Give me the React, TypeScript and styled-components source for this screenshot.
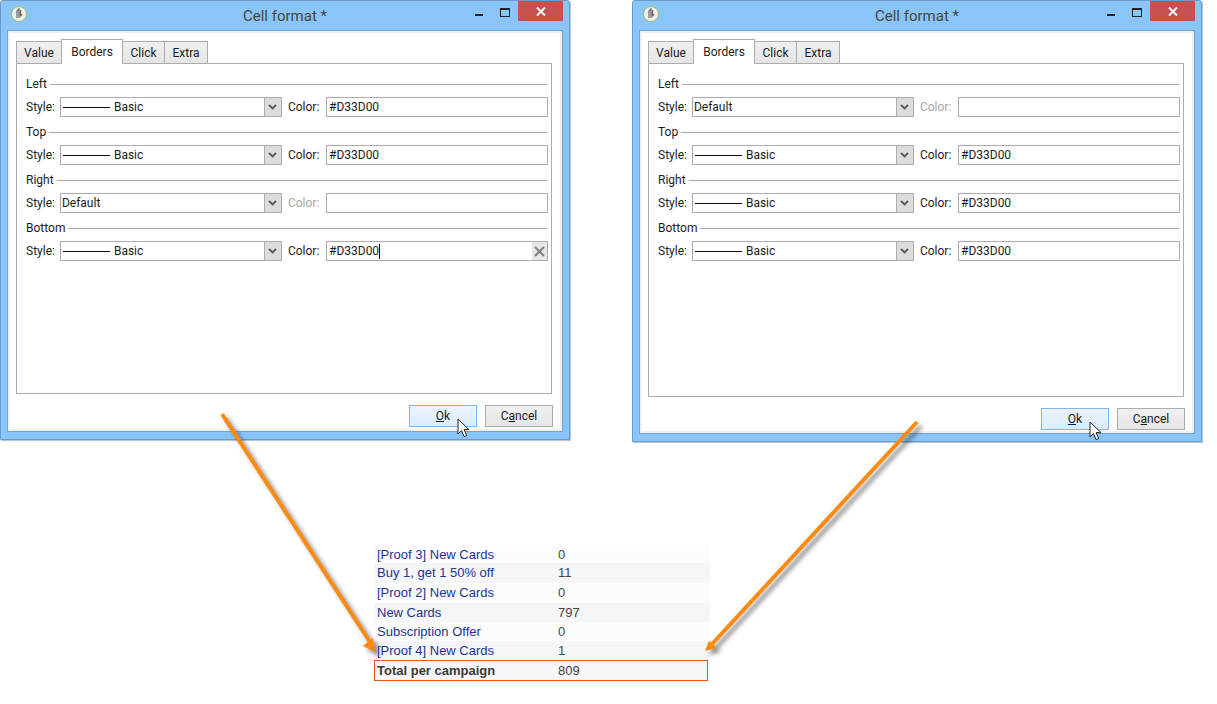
import React from 'react';
import styled, { createGlobalStyle } from 'styled-components';

const GlobalStyle = createGlobalStyle`
    html, body {
        margin: 0;
        padding: 0;
        background: #fff;
    }
`;

const Page = styled.div`
    position: relative;
    width: 1217px;
    height: 704px;
    overflow: hidden;
    font-family: Roboto, 'Noto Sans', sans-serif;
    font-size: 12px;
    color: #1c1c1c;
`;

const Desktop = styled.div`
    display: flex;
    align-items: flex-start;
    gap: 62px;
`;

const DialogWindow = styled.div<{ $height: number }>`
    display: flex;
    flex-direction: column;
    box-sizing: border-box;
    width: 570px;
    height: ${props => props.$height}px;
    background: #8ac5fa;
    border: 1px solid #6c9bc9;
    border-radius: 3px 3px 0 0;
    box-shadow: 1px 1px 1px rgba(90, 130, 170, 0.5);
`;

const TitleBar = styled.div`
    position: relative;
    flex: 0 0 29px;
    display: flex;
    align-items: center;
    justify-content: center;
    font-size: 15px;
    color: #444;
`;

const AppIcon = styled.svg`
    position: absolute;
    left: 9px;
    top: 4px;
`;

const WindowButtons = styled.div`
    position: absolute;
    right: 6px;
    top: 0;
    display: flex;
    align-items: flex-start;
`;

const MinButton = styled.div`
    width: 8px;
    height: 2px;
    margin: 13px 17px 0 0;
    background: #222;
`;

const MaxButton = styled.div`
    box-sizing: border-box;
    width: 10px;
    height: 9px;
    margin: 7px 8px 0 0;
    border: 1px solid #222;
    border-top-width: 2px;
`;

const CloseButton = styled.div`
    display: flex;
    align-items: center;
    justify-content: center;
    width: 45px;
    height: 20px;
    background: #c75050;
`;

const Client = styled.div<{ $bottom: number }>`
    flex: 1;
    display: flex;
    flex-direction: column;
    margin: 0 6px 7px;
    padding: 8px 10px ${props => props.$bottom}px 8px;
    background: #fff;
    border: 1px solid #6fa3d6;
    box-shadow: inset 0 2px 0 #f0f0f0, inset -2px 0 0 #f0f0f0, inset 0 -2px 0 #f0f0f0, inset 2px 0 0 #f0f0f0;
`;

const TabBar = styled.div`
    display: flex;
    align-items: flex-end;
    height: 25px;
    margin-bottom: -1px;
    position: relative;
    z-index: 1;
`;

const Tab = styled.div<{ $active?: boolean; $width: number }>`
    box-sizing: border-box;
    display: flex;
    align-items: center;
    justify-content: center;
    width: ${props => props.$width}px;
    height: ${props => (props.$active ? 25 : 23)}px;
    margin-right: -1px;
    border: 1px solid #acacac;
    border-bottom-color: ${props => (props.$active ? '#fff' : '#acacac')};
    background: ${props => (props.$active ? '#fff' : 'linear-gradient(#f0f0f0, #e5e5e5)')};
    position: relative;
    z-index: ${props => (props.$active ? 1 : 0)};
`;

const Pane = styled.div`
    flex: 1;
    display: flex;
    flex-direction: column;
    padding: 8px 3px 0 9px;
    border: 1px solid #acacac;
`;

const Section = styled.div`
    height: 48px;
`;

const SectionHead = styled.div`
    display: flex;
    align-items: center;
    gap: 3px;
    height: 24px;
    margin-bottom: 1px;
    padding-right: 1px;
`;

const SectionRule = styled.div`
    flex: 1;
    height: 1px;
    background: #a9a9a9;
`;

const FieldRow = styled.div`
    display: flex;
    align-items: center;
    height: 20px;
`;

const FieldLabel = styled.span<{ $disabled?: boolean }>`
    color: ${props => (props.$disabled ? '#a8a8a8' : '#1c1c1c')};
`;

const StyleSelect = styled.div`
    box-sizing: border-box;
    display: flex;
    align-items: center;
    width: 222px;
    height: 20px;
    margin: 0 6px 0 5px;
    border: 1px solid #acacac;
    padding-left: 1px;
`;

const LineSample = styled.span`
    width: 47px;
    height: 1px;
    margin: 0 4px 0 1px;
    background: #111;
`;

const SelectValue = styled.span`
    flex: 1;
`;

const SelectArrow = styled.span`
    display: flex;
    align-items: center;
    justify-content: center;
    align-self: stretch;
    width: 16px;
    background: #dcdcdc;
    border-left: 1px solid #acacac;
`;

const ColorInput = styled.div`
    box-sizing: border-box;
    display: flex;
    align-items: center;
    justify-content: space-between;
    width: 222px;
    height: 20px;
    margin-left: auto;
    border: 1px solid #acacac;
    padding-left: 2px;
`;

const InputText = styled.span`
    display: flex;
    align-items: center;
`;

const Caret = styled.span`
    display: inline-block;
    width: 1px;
    height: 15px;
    background: #000;
`;

const ClearButton = styled.span`
    display: flex;
    align-items: center;
    justify-content: center;
    align-self: stretch;
    width: 15px;
    background: #e6e6e6;
`;

const DialogFooter = styled.div`
    display: flex;
    justify-content: flex-end;
    gap: 8px;
    margin-top: 11px;
    margin-right: -1px;
`;

const DialogButton = styled.div<{ $primary?: boolean }>`
    position: relative;
    box-sizing: border-box;
    display: flex;
    align-items: center;
    justify-content: center;
    width: 68px;
    height: 22px;
    border: 1px solid ${props => (props.$primary ? '#7eb4ea' : '#acacac')};
    background: ${props => (props.$primary ? 'linear-gradient(#ecf4fc, #dcecfc)' : 'linear-gradient(#f0f0f0, #e5e5e5)')};
`;

const Cursor = styled.svg`
    position: absolute;
    left: 47px;
    top: 12px;
`;

const CampaignTable = styled.div`
    width: 336px;
    margin: 103px 0 0 374px;
    font-family: 'Liberation Sans', Arial, sans-serif;
    font-size: 13px;
`;

const CampaignRow = styled.div<{ $height: number; $shaded: boolean; $lift?: boolean }>`
    display: flex;
    align-items: center;
    height: ${props => props.$height}px;
    padding-left: 3px;
    padding-bottom: ${props => (props.$lift ? 2 : 0)}px;
    box-sizing: border-box;
    background: ${props => (props.$shaded ? '#f5f6f8' : '#fcfcfd')};
`;

const CampaignName = styled.span`
    width: 181px;
    color: #1b3592;
`;

const CampaignCount = styled.span`
    color: #444;
`;

const TotalRow = styled.div`
    box-sizing: border-box;
    display: flex;
    align-items: center;
    width: 334px;
    height: 21px;
    padding-left: 2px;
    border: 1px solid #e0571c;
    background: #f7f7f8;
    color: #3a3a3a;
`;

const TotalLabel = styled.span`
    width: 181px;
    font-weight: bold;
`;

const ArrowOverlay = styled.svg`
    position: absolute;
    left: 0;
    top: 0;
    pointer-events: none;
`;

type Border = { name: string; basic: boolean; focused?: boolean };

const leftDialog: Border[] = [
    { name: 'Left', basic: true },
    { name: 'Top', basic: true },
    { name: 'Right', basic: false },
    { name: 'Bottom', basic: true, focused: true },
];

const rightDialog: Border[] = [
    { name: 'Left', basic: false },
    { name: 'Top', basic: true },
    { name: 'Right', basic: true },
    { name: 'Bottom', basic: true },
];

const campaigns = [
    { name: '[Proof 3] New Cards', count: 0, height: 18 },
    { name: 'Buy 1, get 1 50% off', count: 11, height: 20, lift: true },
    { name: '[Proof 2] New Cards', count: 0, height: 20, lift: true },
    { name: 'New Cards', count: 797, height: 19 },
    { name: 'Subscription Offer', count: 0, height: 19 },
    { name: '[Proof 4] New Cards', count: 1, height: 19 },
];

const BorderSection = ({ name, basic, focused }: Border) => (
    <Section>
        <SectionHead>
            <span>{name}</span>
            <SectionRule />
        </SectionHead>
        <FieldRow>
            <FieldLabel>Style:</FieldLabel>
            <StyleSelect>
                {basic && <LineSample />}
                <SelectValue>{basic ? 'Basic' : 'Default'}</SelectValue>
                <SelectArrow>
                    <svg width="9" height="6" viewBox="0 0 9 6">
                        <path d="M1 1l3.5 3.5L8 1" fill="none" stroke="#555" strokeWidth="1.8" />
                    </svg>
                </SelectArrow>
            </StyleSelect>
            <FieldLabel $disabled={!basic}>Color:</FieldLabel>
            <ColorInput>
                <InputText>
                    {basic ? '#D33D00' : ''}
                    {focused && <Caret />}
                </InputText>
                {focused && (
                    <ClearButton>
                        <svg width="11" height="11" viewBox="0 0 11 11">
                            <path d="M1 1l9 9M10 1l-9 9" stroke="#808080" strokeWidth="2" />
                        </svg>
                    </ClearButton>
                )}
            </ColorInput>
        </FieldRow>
    </Section>
);

const Dialog = ({ borders, height, bottom }: { borders: Border[]; height: number; bottom: number }) => (
    <DialogWindow $height={height}>
        <TitleBar>
            <AppIcon width="18" height="18" viewBox="0 0 18 18">
                <circle cx="9" cy="9" r="7.5" fill="#eeeeea" stroke="#9bc46a" strokeWidth="1" />
                <path d="M7 13V6l2-2v9M10.5 5v6.5M12 9l-1.5 2.5" fill="none" stroke="#666" strokeWidth="1.2" />
            </AppIcon>
            Cell format *
            <WindowButtons>
                <MinButton />
                <MaxButton />
                <CloseButton>
                    <svg width="10" height="9" viewBox="0 0 10 9">
                        <path d="M1 .5l8 8M9 .5l-8 8" stroke="#fff" strokeWidth="2" />
                    </svg>
                </CloseButton>
            </WindowButtons>
        </TitleBar>
        <Client $bottom={bottom}>
            <TabBar>
                <Tab $width={46}>Value</Tab>
                <Tab $active $width={62}>
                    Borders
                </Tab>
                <Tab $width={43}>Click</Tab>
                <Tab $width={44}>Extra</Tab>
            </TabBar>
            <Pane>
                {borders.map(border => (
                    <BorderSection key={border.name} {...border} />
                ))}
            </Pane>
            <DialogFooter>
                <DialogButton $primary>
                    <span>
                        <u>O</u>k
                    </span>
                    <Cursor width="13" height="20" viewBox="0 0 13 20">
                        <path
                            d="M1 1v15l3.5-3.4 2.6 6 2.6-1.1-2.6-5.9H12z"
                            fill="#fff"
                            stroke="#222"
                            strokeWidth="1"
                        />
                    </Cursor>
                </DialogButton>
                <DialogButton>
                    <span>
                        C<u>a</u>ncel
                    </span>
                </DialogButton>
            </DialogFooter>
        </Client>
    </DialogWindow>
);

const App = () => (
    <Page>
        <GlobalStyle />
        <Desktop>
            <Dialog borders={leftDialog} height={440} bottom={4} />
            <Dialog borders={rightDialog} height={442} bottom={3} />
        </Desktop>
        <CampaignTable>
            {campaigns.map((row, i) => (
                <CampaignRow key={row.name} $height={row.height} $shaded={i % 2 === 1} $lift={row.lift}>
                    <CampaignName>{row.name}</CampaignName>
                    <CampaignCount>{row.count}</CampaignCount>
                </CampaignRow>
            ))}
            <TotalRow>
                <TotalLabel>Total per campaign</TotalLabel>
                <CampaignCount>809</CampaignCount>
            </TotalRow>
        </CampaignTable>
        <ArrowOverlay width="1217" height="704" viewBox="0 0 1217 704">
            <defs>
                <filter id="arrowShadow" x="-20%" y="-20%" width="140%" height="140%">
                    <feGaussianBlur stdDeviation="2" />
                </filter>
            </defs>
            <g filter="url(#arrowShadow)" opacity="0.55" transform="translate(4 4)">
                <path d="M222 414L370 642" stroke="#333" strokeWidth="4" fill="none" />
                <path d="M375 652L362.7 646L373 638z" fill="#333" />
                <path d="M917 422L712 644" stroke="#333" strokeWidth="4" fill="none" />
                <path d="M705 651L716.7 648L709 640.7z" fill="#333" />
            </g>
            <path d="M222 414L370 642" stroke="#ff8a10" strokeWidth="4" fill="none" />
            <path d="M375 652L362.7 646L373 638z" fill="#ff8a10" />
            <path d="M917 422L712 644" stroke="#ff8a10" strokeWidth="4" fill="none" />
            <path d="M705 651L716.7 648L709 640.7z" fill="#ff8a10" />
        </ArrowOverlay>
    </Page>
);

export default App;
